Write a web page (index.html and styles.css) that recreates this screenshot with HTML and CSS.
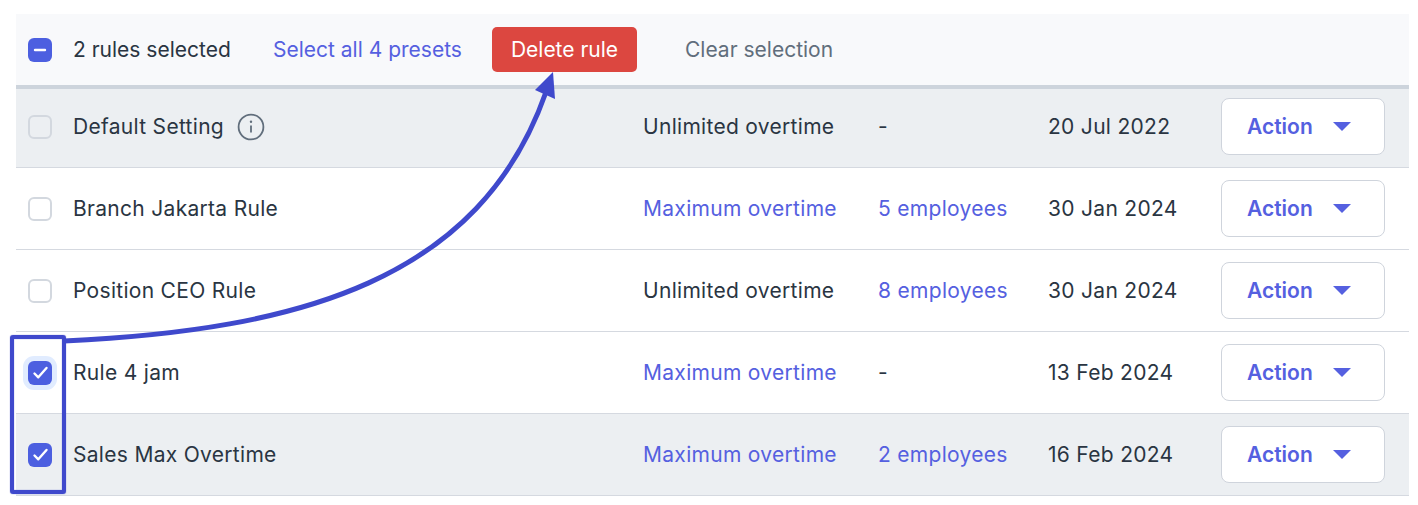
FILE: index.html
```html
<!DOCTYPE html>
<html lang="en">
<head>
<meta charset="utf-8">
<title>Overtime rules</title>
<link rel="stylesheet" href="styles.css">
</head>
<body>
<div class="page">
  <div class="table">
    <div class="bar">
      <span class="check check-on"><svg viewBox="0 0 24 24" class="mark"><path d="M7 12h10" /></svg></span>
      <span class="bar-count">2 rules selected</span>
      <a class="bar-all link">Select all 4 presets</a>
      <button class="delete">Delete rule</button>
      <a class="bar-clear">Clear selection</a>
    </div>
    <div class="row row-first row-grey">
      <span class="check check-off"></span>
      <span class="name">Default Setting<svg class="info" viewBox="0 0 28 28"><circle cx="14" cy="14" r="12.4"/><path d="M14 12.5v7"/><circle class="dot" cx="14" cy="8.8" r="1.2"/></svg></span>
      <span>Unlimited overtime</span>
      <span>-</span>
      <span>20 Jul 2022</span>
      <button class="action">Action<i class="caret"></i></button>
    </div>
    <div class="row">
      <span class="check check-off"></span>
      <span class="name">Branch Jakarta Rule</span>
      <a class="link">Maximum overtime</a>
      <a class="link">5 employees</a>
      <span>30 Jan 2024</span>
      <button class="action">Action<i class="caret"></i></button>
    </div>
    <div class="row">
      <span class="check check-off"></span>
      <span class="name">Position CEO Rule</span>
      <span>Unlimited overtime</span>
      <a class="link">8 employees</a>
      <span>30 Jan 2024</span>
      <button class="action">Action<i class="caret"></i></button>
    </div>
    <div class="row">
      <span class="check check-on check-focus"><svg viewBox="0 0 24 24" class="mark"><path d="M6.5 12.5l3.8 3.8 8.2-9.3"/></svg></span>
      <span class="name">Rule 4 jam</span>
      <a class="link">Maximum overtime</a>
      <span>-</span>
      <span>13 Feb 2024</span>
      <button class="action">Action<i class="caret"></i></button>
    </div>
    <div class="row row-grey">
      <span class="check check-on"><svg viewBox="0 0 24 24" class="mark"><path d="M6.5 12.5l3.8 3.8 8.2-9.3"/></svg></span>
      <span class="name">Sales Max Overtime</span>
      <a class="link">Maximum overtime</a>
      <a class="link">2 employees</a>
      <span>16 Feb 2024</span>
      <button class="action">Action<i class="caret"></i></button>
    </div>
  </div>
  <div class="callout-box"></div>
  <svg class="callout-arrow" viewBox="0 0 1418 505">
    <path class="curve" d="M64 341C300 330 480 280 546 92"/>
    <path class="head" d="M553 72L535 90L555 99Z"/>
  </svg>
</div>
</body>
</html>
```
FILE: styles.css
```css
* { box-sizing: border-box; }
html, body { margin: 0; background: #fff; }
body {
  font-family: Inter, "Liberation Sans", sans-serif;
  font-size: 21px;
  color: #2a3542;
  letter-spacing: 0.3px;
}
.page {
  position: relative;
  height: 505px;
  padding: 14px 9px 0 16px;
}
.bar {
  display: flex;
  align-items: center;
  height: 75px;
  padding-left: 12px;
  background: #f8f9fb;
  border-bottom: 4px solid #cdd4dc;
  letter-spacing: 0;
}
.bar-count { margin-left: 21px; width: 200px; }
.bar-all { width: 219px; }
.bar-clear { margin-left: 48px; color: #616e7c; }
.link { color: #5560e0; }
.delete {
  width: 145px;
  height: 45px;
  border: 0;
  border-radius: 5px;
  background: #dc4740;
  color: #fff;
  font: inherit;
  letter-spacing: inherit;
  padding: 0;
}
.row {
  display: grid;
  grid-template-columns: 57px 570px 235px 170px 173px 164px;
  align-items: center;
  height: 82px;
  border-bottom: 1px solid #d5d9e0;
}
.row-first { height: 79px; padding-bottom: 3px; }
.row > .check { margin-left: 12px; }
.row-grey { background: #eceff2; }
.check {
  position: relative;
  display: block;
  flex: none;
  width: 24px;
  height: 24px;
  border-radius: 6px;
}
.check-off { border: 2px solid #d3d8df; background: #fff; }
.row-grey .check-off { background: #eceff2; }
.check-on { background: #4c5fe0; }
.check-focus { box-shadow: 0 0 0 5px #e1ecff; }
.mark {
  display: block;
  width: 24px;
  height: 24px;
  fill: none;
  stroke: #fff;
  stroke-width: 2.4;
  stroke-linecap: round;
  stroke-linejoin: round;
}
.name { display: flex; align-items: center; }
.info {
  width: 28px;
  height: 28px;
  margin-left: 13px;
  fill: none;
  stroke: #616e7c;
  stroke-width: 1.8;
}
.info .dot { fill: #616e7c; stroke: none; }
.action {
  display: flex;
  align-items: center;
  width: 164px;
  height: 57px;
  padding: 0 0 0 25px;
  background: #fff;
  border: 1px solid #cfd4dc;
  border-radius: 8px;
  color: #5560e0;
  font: inherit;
  font-weight: 600;
  letter-spacing: 0;
}
.caret {
  width: 0;
  height: 0;
  margin-left: 20px;
  border-left: 9px solid transparent;
  border-right: 9px solid transparent;
  border-top: 9px solid #5560e0;
}
.callout-box {
  position: absolute;
  left: 10px;
  top: 335px;
  width: 56px;
  height: 159px;
  border: 4px solid #3f49cc;
  border-radius: 3px;
  box-shadow: 0 0 1px #3f49cc, inset 0 0 1px #3f49cc;
}
.callout-arrow {
  position: absolute;
  left: 0;
  top: 0;
  width: 1418px;
  height: 505px;
  pointer-events: none;
}
.curve { fill: none; stroke: #3f49cc; stroke-width: 5; }
.head { fill: #3f49cc; }
```
